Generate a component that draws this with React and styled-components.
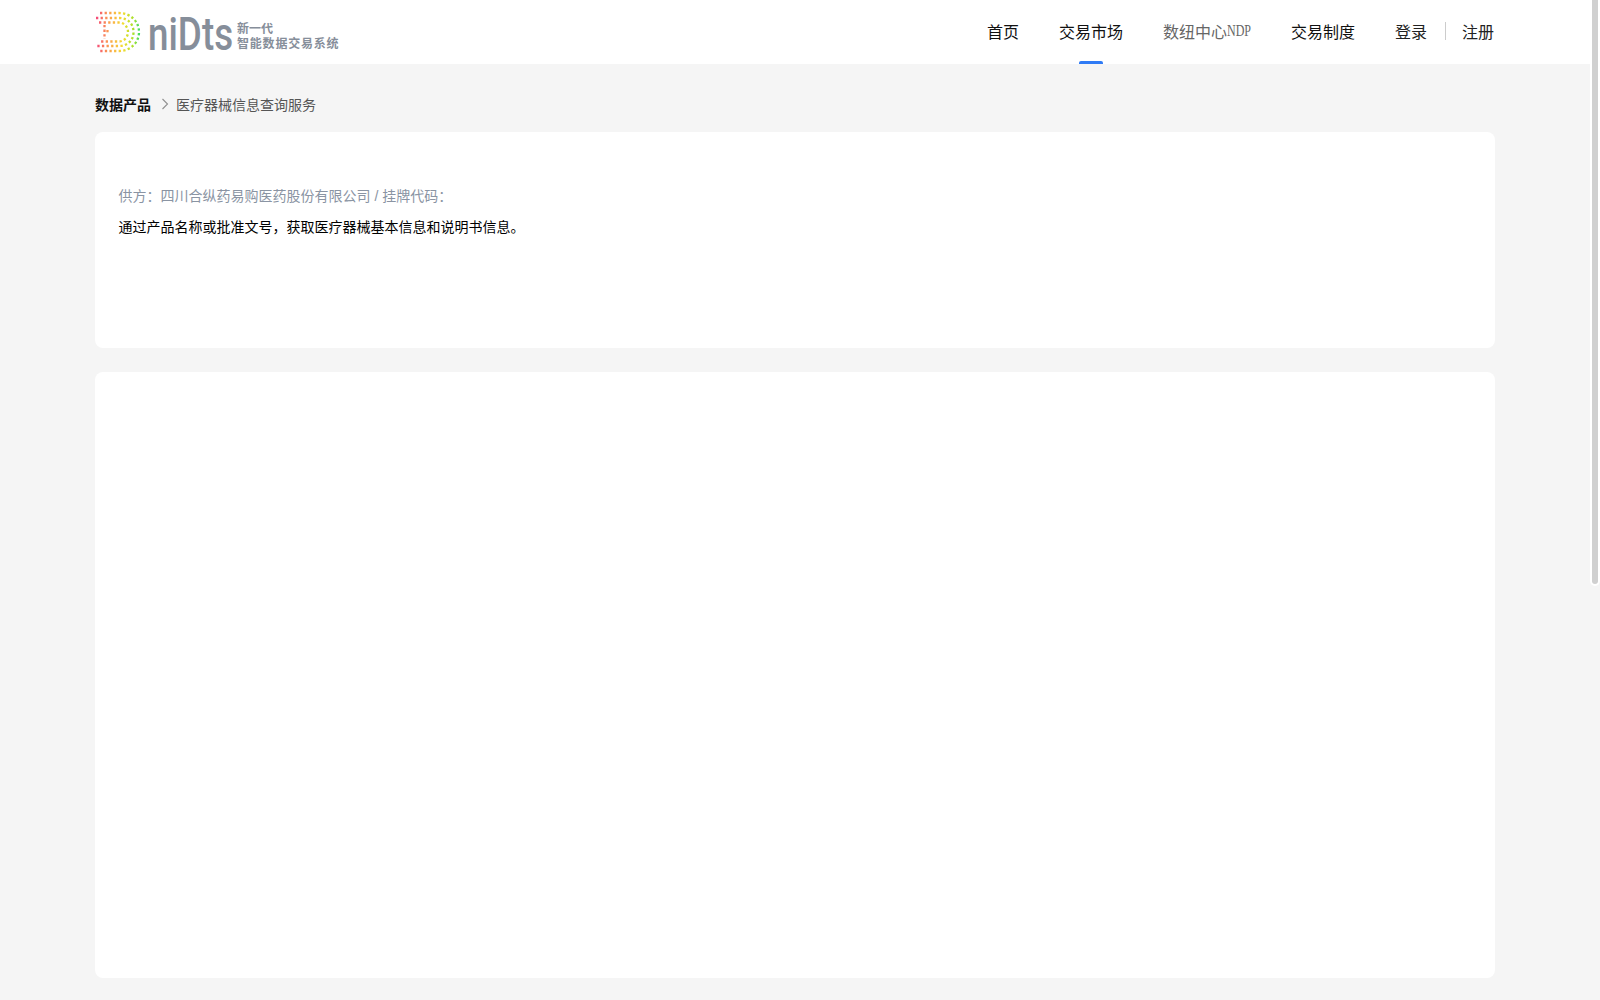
import React from 'react'
import styled, { createGlobalStyle } from 'styled-components'

const navItems = [
    { label: '首页' },
    { label: '交易市场', active: true },
    { label: '数纽中心', suffix: 'NDP', muted: true },
    { label: '交易制度' },
]

function Logo() {
    return (
        <LogoBox>
            <svg width="46" height="44" viewBox="0 0 46 44">
                <defs>
                    <linearGradient id="dotGrad" gradientUnits="userSpaceOnUse" x1="0" y1="0" x2="46" y2="0">
                        <stop offset="0" stopColor="#f43f7f" />
                        <stop offset="0.3" stopColor="#fb9f4c" />
                        <stop offset="0.6" stopColor="#f5dc32" />
                        <stop offset="0.85" stopColor="#a4e02c" />
                        <stop offset="1" stopColor="#22dc74" />
                    </linearGradient>
                </defs>
                <g fill="none" stroke="url(#dotGrad)" strokeWidth="2.300" strokeDasharray="2.300 2.300">
                    <path d="M5 3 H24 C36 3 44 12 44 22 C44 32 36 41 24 41 H5" />
                    <path d="M1 8 H24 C33 8 38.500 14 38.500 22 C38.500 30 33 36 24 36 H1" />
                    <path d="M4 12.500 H24 C29 12.500 33 17 33 22 C33 27 29 31.500 24 31.500 H4" />
                    <path d="M9.500 15 V29" />
                    <path d="M12.500 20 V24" />
                </g>
            </svg>
            <LogoWord>niDts</LogoWord>
            <Slogan>
                <span>新一代</span>
                <span>智能数据交易系统</span>
            </Slogan>
        </LogoBox>
    )
}

function App() {
    return (
        <Page>
            <GlobalStyle />
            <Header>
                <HeaderInner>
                    <Logo />
                    <Nav>
                        {navItems.map((item) => (
                            <NavItem key={item.label} $active={item.active} $muted={item.muted}>
                                {item.label}
                                {item.suffix && <NarrowSuffix>{item.suffix}</NarrowSuffix>}
                            </NavItem>
                        ))}
                        <Auth>
                            <AuthLink>登录</AuthLink>
                            <AuthDivider />
                            <AuthLink>注册</AuthLink>
                        </Auth>
                    </Nav>
                </HeaderInner>
            </Header>
            <Main>
                <Crumbs>
                    <CrumbRoot>数据产品</CrumbRoot>
                    <svg width="10" height="12" viewBox="0 0 10 12">
                        <path d="M2.500 1 L7.500 6 L2.500 11" fill="none" stroke="#909090" strokeWidth="1.100" />
                    </svg>
                    <CrumbCurrent>医疗器械信息查询服务</CrumbCurrent>
                </Crumbs>
                <InfoCard>
                    <Supplier>供方：四川合纵药易购医药股份有限公司 / 挂牌代码：</Supplier>
                    <Intro>通过产品名称或批准文号，获取医疗器械基本信息和说明书信息。</Intro>
                </InfoCard>
                <DetailCard />
            </Main>
            <ScrollThumb />
        </Page>
    )
}

export default App

const GlobalStyle = createGlobalStyle`
    html, body {
        margin: 0;
        padding: 0;
        background: #f5f5f5;
        font-family: "Liberation Sans", "Noto Sans CJK SC", sans-serif;
    }
`

const Page = styled.div`
    min-height: 100vh;
    overflow: hidden;
`

const ScrollThumb = styled.div`
    position: fixed;
    top: 0;
    right: 2px;
    width: 6px;
    height: 584px;
    background: #d0d0d0;
    border-radius: 0 0 3px 3px;
    box-shadow: 0 0 0 2px #fff;
`

const Header = styled.header`
    height: 64px;
    background: #fff;
`

const HeaderInner = styled.div`
    box-sizing: border-box;
    width: 1400px;
    height: 64px;
    margin-left: 95px;
    display: flex;
    align-items: center;
    justify-content: space-between;
`

const LogoBox = styled.div`
    display: flex;
    align-items: center;
    height: 64px;
    svg {
        display: block;
    }
`

const LogoWord = styled.span`
    display: inline-block;
    width: 86px;
    margin-left: 7px;
    padding-top: 4px;
    font-family: Roboto, "Liberation Sans", sans-serif;
    font-size: 46px;
    line-height: 44px;
    font-weight: 500;
    white-space: nowrap;
    color: #868e9a;
    transform: scaleX(0.8);
    transform-origin: left center;
`

const Slogan = styled.div`
    margin-left: 3px;
    padding-top: 10px;
    display: flex;
    flex-direction: column;
    font-size: 12px;
    line-height: 15px;
    font-weight: 700;
    color: #868e9a;
    span:last-child {
        letter-spacing: 0.8px;
    }
`

const Nav = styled.nav`
    display: flex;
    align-items: center;
    gap: 40px;
    height: 64px;
    margin-right: 1px;
`

const NavItem = styled.a`
    position: relative;
    display: flex;
    align-items: center;
    height: 64px;
    padding-bottom: 2px;
    box-sizing: border-box;
    font-size: 16px;
    color: ${props => props.$muted ? '#666' : '#111'};
    font-family: ${props => props.$muted ? '"Liberation Serif", "Noto Sans CJK SC", serif' : 'inherit'};
    ${props => props.$active && `
        &::after {
            content: '';
            position: absolute;
            left: 50%;
            bottom: 0;
            width: 24px;
            height: 3px;
            margin-left: -12px;
            border-radius: 2px 2px 0 0;
            background: #2f7bf5;
        }
    `}
`

const NarrowSuffix = styled.span`
    display: inline-block;
    width: 24px;
    transform: scaleX(0.75);
    transform-origin: left center;
    white-space: nowrap;
`

const Auth = styled.div`
    display: flex;
    align-items: center;
    padding-bottom: 2px;
`

const AuthLink = styled.a`
    font-size: 16px;
    color: #222;
`

const AuthDivider = styled.i`
    display: block;
    width: 1px;
    height: 18px;
    margin: 0 16px 0 18px;
    background: #ccc;
`

const Main = styled.main`
    width: 1400px;
    margin-left: 95px;
    padding-bottom: 22px;
`

const Crumbs = styled.div`
    box-sizing: border-box;
    display: flex;
    align-items: center;
    height: 68px;
    padding-top: 12px;
    gap: 5px;
    font-size: 14px;
`

const CrumbRoot = styled.span`
    font-weight: 700;
    color: #111;
    margin-right: 4px;
`

const CrumbCurrent = styled.span`
    color: #555;
    margin-left: 1px;
`

const Card = styled.section`
    background: #fff;
    border-radius: 8px;
`

const InfoCard = styled(Card)`
    box-sizing: border-box;
    height: 216px;
    padding: 53px 23.500px 0;
    font-size: 14px;
    line-height: 22px;
`

const Supplier = styled.div`
    color: #8a94a3;
    margin-bottom: 9px;
`

const Intro = styled.div`
    color: #000;
`

const DetailCard = styled(Card)`
    height: 606px;
    margin-top: 24px;
`
